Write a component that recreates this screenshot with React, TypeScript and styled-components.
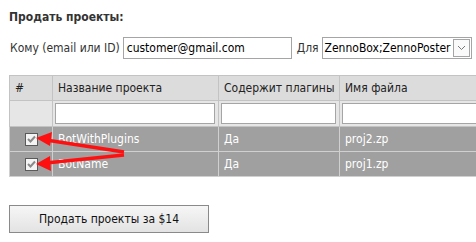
import React from "react";
import styled, { createGlobalStyle } from "styled-components";

const GlobalStyle = createGlobalStyle`
  html, body {
    margin: 0;
    padding: 0;
    background: #ffffff;
    overflow: hidden;
  }
  body {
    font-family: "DejaVu Sans Condensed", "DejaVu Sans", sans-serif;
    font-size: 12px;
    color: #222222;
  }
`;

const Page = styled.div`
  position: relative;
  width: 476px;
  height: 242px;
  padding: 9px 0 0 9px;
  box-sizing: border-box;
`;

const Title = styled.div`
  font-weight: 700;
  font-size: 12px;
  color: #333333;
  height: 16px;
  line-height: 16px;
`;

const FormRow = styled.div`
  display: flex;
  align-items: center;
  margin-top: 12px;
  height: 22px;
`;

const Label = styled.span`
  color: #333333;
  margin-left: 1px;
  margin-right: 3px;
`;

const TextInput = styled.div`
  width: 164px;
  height: 20px;
  border: 1px solid #a5a5a5;
  background: #fff;
  line-height: 20px;
  padding-left: 3px;
  box-sizing: content-box;
  color: #000;
  font-size: 12px;
  margin-right: 4px;
  overflow: hidden;
  white-space: nowrap;
`;

const Select = styled.div`
  display: flex;
  align-items: center;
  width: 146px;
  height: 20px;
  border: 1px solid #a5a5a5;
  background: #fff;
  padding-left: 2px;
  color: #000;
`;

const SelectText = styled.span`
  flex: 1;
`;

const SelectArrow = styled.div`
  width: 15px;
  height: 16px;
  border: 1px solid #a5a5a5;
  margin-right: 1px;
  display: flex;
  align-items: center;
  justify-content: center;
  background: #fafafa;
`;

const Table = styled.table`
  margin-top: 16px;
  border-collapse: collapse;
  width: 480px;
  table-layout: fixed;
`;

const HeadCell = styled.th<{ $w?: number }>`
  width: ${(p) => (p.$w ? `${p.$w}px` : "auto")};
  height: 24px;
  background: #dcdcdc;
  border: 1px solid #c3c3c3;
  text-align: left;
  font-weight: 400;
  padding: 0 0 0 5px;
  color: #222;
`;

const FilterCell = styled.td`
  height: 25px;
  background: #e6e6e6;
  border: 1px solid #c3c3c3;
  padding: 0 3px 0 2px;
`;

const FilterInput = styled.div`
  height: 19px;
  border: 1px solid #a5a5a5;
  background: #fff;
`;

const DataRow = styled.tr`
  background: #a0a0a0;
`;

const DataCell = styled.td`
  height: 24px;
  border: 1px solid #d0d0d0;
  padding: 0 0 0 5px;
  color: #ffffff;
  vertical-align: middle;
`;

const Check = styled.div`
  width: 11px;
  height: 11px;
  border: 1px solid #5a5a5a;
  background: #f4f4f4;
  margin-left: 10px;
  display: flex;
  align-items: center;
  justify-content: center;
`;

const SellButton = styled.div`
  margin-top: 28px;
  width: 198px;
  height: 26px;
  border: 1px solid #8a8a8a;
  background: linear-gradient(#f6f6f6, #e3e3e3);
  display: flex;
  align-items: center;
  justify-content: center;
  color: #111;
`;

const Arrows = styled.svg`
  position: absolute;
  left: 0;
  top: 0;
  pointer-events: none;
`;

const rows = [
  { name: "BotWithPlugins", plugins: "Да", file: "proj2.zp" },
  { name: "BotName", plugins: "Да", file: "proj1.zp" },
];

const Tick = () => (
  <svg width="9" height="8" viewBox="0 0 9 8">
    <path d="M1 4 L3.5 6.5 L8 1.5" fill="none" stroke="#8a8a8a" strokeWidth="2" />
  </svg>
);

export default function App() {
  return (
    <>
      <GlobalStyle />
      <Page>
        <Title>Продать проекты:</Title>
        <FormRow>
          <Label>Кому (email или ID)</Label>
          <TextInput>customer@gmail.com</TextInput>
          <Label>Для</Label>
          <Select>
            <SelectText>ZennoBox;ZennoPoster</SelectText>
            <SelectArrow>
              <svg width="9" height="6" viewBox="0 0 9 6">
                <path d="M1 1 L4.5 4.5 L8 1" fill="none" stroke="#777" strokeWidth="1" />
              </svg>
            </SelectArrow>
          </Select>
        </FormRow>
        <Table>
          <thead>
            <tr>
              <HeadCell $w={37}>#</HeadCell>
              <HeadCell $w={160}>Название проекта</HeadCell>
              <HeadCell $w={115}>Содержит плагины</HeadCell>
              <HeadCell>Имя файла</HeadCell>
            </tr>
          </thead>
          <tbody>
            <tr>
              <FilterCell />
              <FilterCell>
                <FilterInput />
              </FilterCell>
              <FilterCell>
                <FilterInput />
              </FilterCell>
              <FilterCell>
                <FilterInput />
              </FilterCell>
            </tr>
            {rows.map((r) => (
              <DataRow key={r.file}>
                <DataCell>
                  <Check>
                    <Tick />
                  </Check>
                </DataCell>
                <DataCell>{r.name}</DataCell>
                <DataCell>{r.plugins}</DataCell>
                <DataCell>{r.file}</DataCell>
              </DataRow>
            ))}
          </tbody>
        </Table>
        <SellButton>Продать проекты за $14</SellButton>
        <Arrows width="476" height="242">
          <g stroke="#ff1010" strokeWidth="3.5" fill="#ff1010">
            <line x1="124" y1="152" x2="46" y2="140" />
            <polygon points="36,138 52,132 50,146" stroke="none" />
            <line x1="124" y1="155" x2="46" y2="163" />
            <polygon points="36,164 50,156 51,171" stroke="none" />
          </g>
        </Arrows>
      </Page>
    </>
  );
}
